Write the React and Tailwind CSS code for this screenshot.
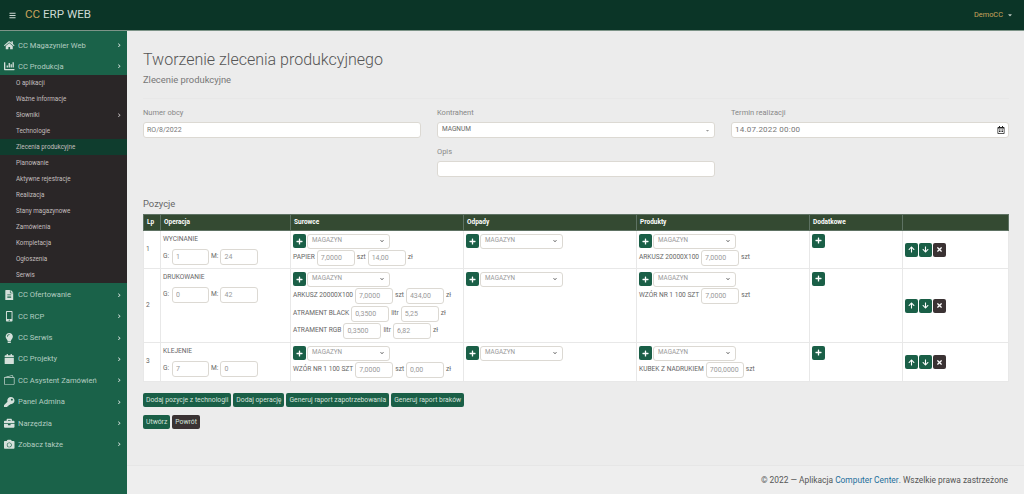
import React from "react";
import {
  FaHome,
  FaChartBar,
  FaFileAlt,
  FaMobileAlt,
  FaLightbulb,
  FaCalendar,
  FaKey,
  FaBriefcase,
  FaCamera,
  FaPlus,
  FaArrowUp,
  FaArrowDown,
  FaTimes,
  FaChevronRight,
  FaChevronDown,
  FaBars,
  FaCaretDown,
  FaRegCalendarAlt,
} from "react-icons/fa";
import { BsWallet2 } from "react-icons/bs";

const topMenu = [
  { label: "CC Magazynier Web", icon: FaHome },
  { label: "CC Produkcja", icon: FaChartBar },
];

const subMenu = [
  { label: "O aplikacji" },
  { label: "Ważne informacje" },
  { label: "Słowniki", arrow: true },
  { label: "Technologie" },
  { label: "Zlecenia produkcyjne", active: true },
  { label: "Planowanie" },
  { label: "Aktywne rejestracje" },
  { label: "Realizacja" },
  { label: "Stany magazynowe" },
  { label: "Zamówienia" },
  { label: "Kompletacja" },
  { label: "Ogłoszenia" },
  { label: "Serwis" },
];

const bottomMenu = [
  { label: "CC Ofertowanie", icon: FaFileAlt },
  { label: "CC RCP", icon: FaMobileAlt },
  { label: "CC Serwis", icon: FaLightbulb },
  { label: "CC Projekty", icon: FaCalendar },
  { label: "CC Asystent Zamówień", icon: BsWallet2 },
  { label: "Panel Admina", icon: FaKey },
  { label: "Narzędzia", icon: FaBriefcase },
  { label: "Zobacz także", icon: FaCamera },
];

const rows = [
  {
    lp: "1",
    name: "WYCINANIE",
    g: "1",
    m: "24",
    rowClass: "h-[38px]",
    materials: [{ name: "PAPIER", qty: "7,0000", unit: "szt", price: "14,00" }],
    product: { name: "ARKUSZ 20000X100", qty: "7,0000" },
  },
  {
    lp: "2",
    name: "DRUKOWANIE",
    g: "0",
    m: "42",
    rowClass: "h-[74px]",
    materials: [
      { name: "ARKUSZ 20000X100", qty: "7,0000", unit: "szt", price: "434,00" },
      { name: "ATRAMENT BLACK", qty: "0,3500", unit: "litr", price: "5,25" },
      { name: "ATRAMENT RGB", qty: "0,3500", unit: "litr", price: "6,82" },
    ],
    product: { name: "WZÓR NR 1 100 SZT", qty: "7,0000" },
  },
  {
    lp: "3",
    name: "KLEJENIE",
    g: "7",
    m: "0",
    rowClass: "h-[39px]",
    materials: [{ name: "WZÓR NR 1 100 SZT", qty: "7,0000", unit: "szt", price: "0,00" }],
    product: { name: "KUBEK Z NADRUKIEM", qty: "700,0000" },
  },
];

const MenuItem = ({ item }) => {
  const Icon = item.icon;
  return (
    <div className="h-[21.4px] flex items-center pl-[3px] pr-[6px] text-[#b3cdc1] text-[7.6px]">
      <span className="w-[13px] flex justify-center shrink-0">
        <Icon className="text-[10.5px] text-[#d5e0db]" />
      </span>
      <span className="ml-[2px] flex-1 whitespace-nowrap">{item.label}</span>
      <FaChevronRight className="text-[4.5px] text-[#d5e0db]" />
    </div>
  );
};

const TextInput = ({ value, className }) => (
  <input
    readOnly
    value={value}
    className={`block h-[16px] rounded-[3px] border border-[#dcd9d3] bg-white px-[3px] text-[7px] text-[#999] outline-none ${className}`}
  />
);

const IconButton = ({ icon: Icon, dark }) => (
  <button
    className={`w-[13px] h-[14px] rounded-[2px] flex items-center justify-center text-white text-[7px] ${
      dark ? "bg-[#3a3233]" : "bg-[#1a5f47]"
    }`}
  >
    <Icon />
  </button>
);

const WarehouseRow = () => (
  <div className="flex items-center gap-[1px]">
    <IconButton icon={FaPlus} />
    <div className="w-[83px] h-[15px] rounded-[3px] border border-[#dcd9d3] bg-white flex items-center justify-between pl-[4px] pr-[5px] text-[6.3px] text-[#999]">
      MAGAZYN
      <FaChevronDown className="text-[4px] text-[#555]" />
    </div>
  </div>
);

const Th = ({ children, className }) => (
  <th className={`border border-[#5e7263] px-[3px] text-left font-bold text-[6.5px] text-white ${className}`}>
    {children}
  </th>
);

const Td = ({ children, className }) => (
  <td className={`border border-[#e8e8e8] px-[2px] align-top text-[6.6px] text-[#666] ${className}`}>
    {children}
  </td>
);

const ActionButton = ({ children, dark }) => (
  <button
    className={`h-[14px] px-[3px] rounded-[2px] text-[6.8px] leading-none text-[#d5e2dc] ${
      dark ? "bg-[#3a3233]" : "bg-[#1a5f47]"
    }`}
  >
    {children}
  </button>
);

const Field = ({ label, children }) => (
  <div>
    <div className="text-[7.5px] leading-[10px] text-[#888] mb-[4px]">{label}</div>
    {children}
  </div>
);

const App = () => {
  return (
    <div className="w-[1024px] h-[494px] overflow-hidden flex flex-col bg-[#ececec] font-['Roboto',sans-serif]">
      <header className="h-[31px] shrink-0 bg-[#0b3527] border-b border-[#7d9488] flex items-center pl-[9px] pr-[11px]">
        <FaBars className="text-[7px] text-[#cfd8d4]" />
        <div className="ml-[9px] text-[11.6px] text-[#cdd9d3]">
          <span className="text-[#c9a45c]">CC</span> ERP WEB
        </div>
        <div className="ml-auto flex items-center gap-[4px] text-[7.4px] text-[#c9a45c]">
          DemoCC
          <FaCaretDown className="text-[6px] text-[#b9c4bf]" />
        </div>
      </header>

      <div className="flex flex-1 min-h-0">
        <aside className="w-[127px] shrink-0 bg-[#1a6249] pt-[3.5px]">
          {topMenu.map((item) => (
            <MenuItem key={item.label} item={item} />
          ))}
          <div className="bg-[#2a2627] mt-[-2px] mb-[1px]">
            {subMenu.map((item) => (
              <div
                key={item.label}
                className={`h-[16px] flex items-center pl-[16px] pr-[6px] text-[6.3px] text-[#c4bfbf] ${
                  item.active ? "bg-[#0f3d2e]" : ""
                }`}
              >
                <span className="flex-1">{item.label}</span>
                {item.arrow && <FaChevronRight className="text-[4.5px]" />}
              </div>
            ))}
          </div>
          {bottomMenu.map((item) => (
            <MenuItem key={item.label} item={item} />
          ))}
        </aside>

        <main className="flex-1 min-w-0 flex flex-col">
          <div className="flex-1 pl-[16px] pr-[15px] pt-[18px]">
            <h1 className="text-[16px] leading-[22px] font-light text-[#555]">
              Tworzenie zlecenia produkcyjnego
            </h1>
            <p className="text-[9.4px] leading-[13px] mt-[2px] text-[#777]">Zlecenie produkcyjne</p>

            <div className="grid grid-cols-3 gap-x-[16px] gap-y-[9px] mt-[12px] border-t border-[#e8e8e8] pt-[9px]">
              <Field label="Numer obcy">
                <input
                  readOnly
                  value="RO/8/2022"
                  className="block w-full h-[16px] rounded-[3px] border border-[#dcd9d3] bg-white px-[3px] text-[7px] text-[#777] outline-none"
                />
              </Field>
              <Field label="Kontrahent">
                <div className="h-[16px] rounded-[3px] border border-[#dcd9d3] bg-white flex items-center justify-between px-[4px] text-[6.5px] text-[#666]">
                  MAGNUM
                  <FaCaretDown className="text-[5px] text-[#999]" />
                </div>
              </Field>
              <Field label="Termin realizacji">
                <div className="h-[16px] rounded-[3px] border border-[#dcd9d3] bg-white flex items-center justify-between px-[3px] text-[8px] tracking-[0.2px] text-[#777]">
                  14.07.2022 00:00
                  <FaRegCalendarAlt className="text-[8px] text-[#222]" />
                </div>
              </Field>
              <div />
              <Field label="Opis">
                <input
                  readOnly
                  className="block w-full h-[16px] rounded-[3px] border border-[#dcd9d3] bg-white outline-none"
                />
              </Field>
            </div>

            <h2 className="text-[9.4px] leading-[13px] mt-[20px] mb-[4px] text-[#666]">Pozycje</h2>

            <table className="w-[865px] table-fixed border-collapse bg-white">
              <colgroup>
                <col className="w-[17px]" />
                <col className="w-[130px]" />
                <col className="w-[173px]" />
                <col className="w-[173px]" />
                <col className="w-[173px]" />
                <col className="w-[93px]" />
                <col className="w-[106px]" />
              </colgroup>
              <thead>
                <tr className="h-[16px] bg-[#344a32]">
                  <Th>Lp</Th>
                  <Th>Operacja</Th>
                  <Th>Surowce</Th>
                  <Th>Odpady</Th>
                  <Th>Produkty</Th>
                  <Th>Dodatkowe</Th>
                  <Th />
                </tr>
              </thead>
              <tbody>
                {rows.map((row) => (
                  <tr key={row.lp} className={row.rowClass}>
                    <Td className="!align-middle">{row.lp}</Td>
                    <Td className="pt-[3px]">
                      <div className="leading-[10px]">{row.name}</div>
                      <div className="flex items-center mt-[5px]">
                        <span>G:</span>
                        <TextInput value={row.g} className="w-[37px] ml-[3px]" />
                        <span className="ml-[2px]">M:</span>
                        <TextInput value={row.m} className="w-[38px] ml-[2px]" />
                      </div>
                    </Td>
                    <Td className="pt-[2.5px]">
                      <WarehouseRow />
                      <div className="flex flex-col gap-[1.5px] mt-[1.5px]">
                        {row.materials.map((mat) => (
                          <div key={mat.name} className="flex items-center whitespace-nowrap">
                            <span>{mat.name}</span>
                            <TextInput value={mat.qty} className="w-[38px] ml-[2px]" />
                            <span className="ml-[2px]">{mat.unit}</span>
                            <TextInput value={mat.price} className="w-[38px] ml-[2px]" />
                            <span className="ml-[2px]">zł</span>
                          </div>
                        ))}
                      </div>
                    </Td>
                    <Td className="pt-[2.5px]">
                      <WarehouseRow />
                    </Td>
                    <Td className="pt-[2.5px]">
                      <WarehouseRow />
                      <div className="flex items-center whitespace-nowrap mt-[1.5px]">
                        <span>{row.product.name}</span>
                        <TextInput value={row.product.qty} className="w-[38px] ml-[2px]" />
                        <span className="ml-[2px]">szt</span>
                      </div>
                    </Td>
                    <Td className="pt-[2.5px]">
                      <IconButton icon={FaPlus} />
                    </Td>
                    <Td className="!align-middle">
                      <div className="flex gap-[1px]">
                        <IconButton icon={FaArrowUp} />
                        <IconButton icon={FaArrowDown} />
                        <IconButton icon={FaTimes} dark />
                      </div>
                    </Td>
                  </tr>
                ))}
              </tbody>
            </table>

            <div className="flex gap-[2px] mt-[11px]">
              <ActionButton>Dodaj pozycje z technologii</ActionButton>
              <ActionButton>Dodaj operację</ActionButton>
              <ActionButton>Generuj raport zapotrzebowania</ActionButton>
              <ActionButton>Generuj raport braków</ActionButton>
            </div>
            <div className="flex gap-[2px] mt-[8px]">
              <ActionButton>Utwórz</ActionButton>
              <ActionButton dark>Powrót</ActionButton>
            </div>
          </div>

          <footer className="h-[29px] shrink-0 border-t border-[#e6e6e6] bg-[#eeeeee] flex items-center justify-end pr-[16px] text-[8.4px] text-[#555]">
            © 2022 — Aplikacja&nbsp;<span className="text-[#1f6f9c]">Computer Center</span>. Wszelkie prawa zastrzeżone
          </footer>
        </main>
      </div>
    </div>
  );
};

export default App;
